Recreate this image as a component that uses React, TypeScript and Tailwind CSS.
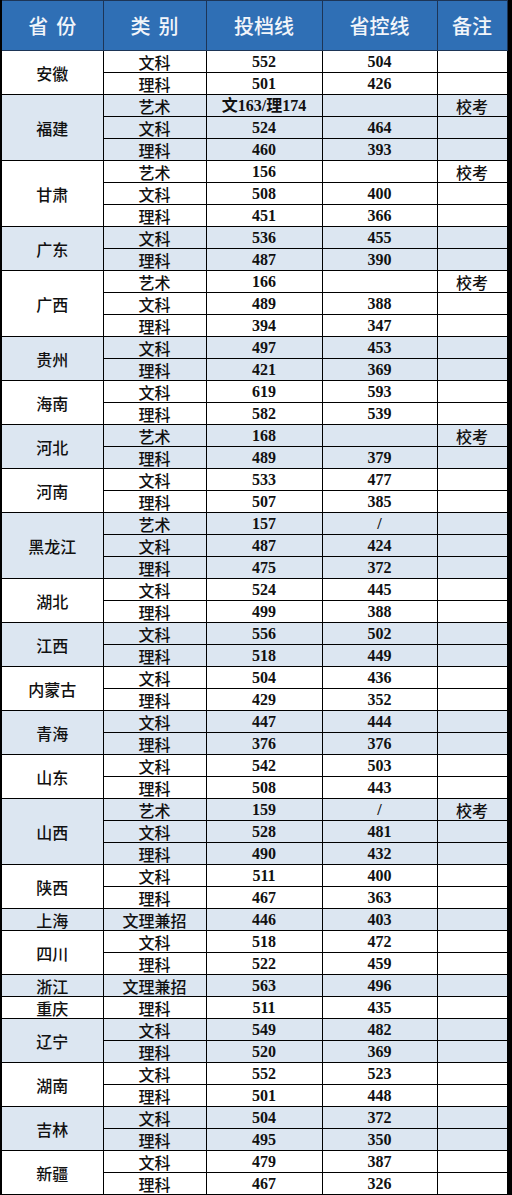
type Row = [string, string, string, string];

const groups: { p: string; rows: Row[] }[] = [
  { p: "安徽", rows: [["文科", "552", "504", ""], ["理科", "501", "426", ""]] },
  { p: "福建", rows: [["艺术", "文163/理174", "", "校考"], ["文科", "524", "464", ""], ["理科", "460", "393", ""]] },
  { p: "甘肃", rows: [["艺术", "156", "", "校考"], ["文科", "508", "400", ""], ["理科", "451", "366", ""]] },
  { p: "广东", rows: [["文科", "536", "455", ""], ["理科", "487", "390", ""]] },
  { p: "广西", rows: [["艺术", "166", "", "校考"], ["文科", "489", "388", ""], ["理科", "394", "347", ""]] },
  { p: "贵州", rows: [["文科", "497", "453", ""], ["理科", "421", "369", ""]] },
  { p: "海南", rows: [["文科", "619", "593", ""], ["理科", "582", "539", ""]] },
  { p: "河北", rows: [["艺术", "168", "", "校考"], ["理科", "489", "379", ""]] },
  { p: "河南", rows: [["文科", "533", "477", ""], ["理科", "507", "385", ""]] },
  { p: "黑龙江", rows: [["艺术", "157", "/", ""], ["文科", "487", "424", ""], ["理科", "475", "372", ""]] },
  { p: "湖北", rows: [["文科", "524", "445", ""], ["理科", "499", "388", ""]] },
  { p: "江西", rows: [["文科", "556", "502", ""], ["理科", "518", "449", ""]] },
  { p: "内蒙古", rows: [["文科", "504", "436", ""], ["理科", "429", "352", ""]] },
  { p: "青海", rows: [["文科", "447", "444", ""], ["理科", "376", "376", ""]] },
  { p: "山东", rows: [["文科", "542", "503", ""], ["理科", "508", "443", ""]] },
  { p: "山西", rows: [["艺术", "159", "/", "校考"], ["文科", "528", "481", ""], ["理科", "490", "432", ""]] },
  { p: "陕西", rows: [["文科", "511", "400", ""], ["理科", "467", "363", ""]] },
  { p: "上海", rows: [["文理兼招", "446", "403", ""]] },
  { p: "四川", rows: [["文科", "518", "472", ""], ["理科", "522", "459", ""]] },
  { p: "浙江", rows: [["文理兼招", "563", "496", ""]] },
  { p: "重庆", rows: [["理科", "511", "435", ""]] },
  { p: "辽宁", rows: [["文科", "549", "482", ""], ["理科", "520", "369", ""]] },
  { p: "湖南", rows: [["文科", "552", "523", ""], ["理科", "501", "448", ""]] },
  { p: "吉林", rows: [["文科", "504", "372", ""], ["理科", "495", "350", ""]] },
  { p: "新疆", rows: [["文科", "479", "387", ""], ["理科", "467", "326", ""]] },
];

const cjk = "font-['Noto_Sans_CJK_SC',sans-serif]";
const num = "font-['Liberation_Serif','Noto_Sans_CJK_SC',serif] font-bold";
const cell = "border border-black p-0 text-center align-middle leading-none";

const headers = [
  { t: "省份", wide: true },
  { t: "类别", wide: true },
  { t: "投档线", wide: false },
  { t: "省控线", wide: false },
  { t: "备注", wide: false },
];

export default function App() {
  return (
    <div className="flex w-[512px] bg-black">
      <table className="w-[506px] table-fixed border-collapse bg-white text-[#111] border-l-2 border-l-black">
        <colgroup>
          <col className="w-[102px]" />
          <col className="w-[103px]" />
          <col className="w-[116px]" />
          <col className="w-[115px]" />
          <col className="w-[70px]" />
        </colgroup>
        <thead>
          <tr className={`h-[50px] bg-[#2f6fb5] text-[20px] text-[#f2f5fa] ${cjk}`}>
            {headers.map((h) => (
              <th key={h.t} className="border border-[#1d3556] p-0 text-center font-medium">
                <span className={h.wide ? "tracking-[8px] pl-[8px]" : ""}>{h.t}</span>
              </th>
            ))}
          </tr>
        </thead>
        <tbody>
          {groups.map((g, gi) => {
            const bg = gi % 2 === 1 ? "bg-[#dce6f1]" : "bg-white";
            return g.rows.map((r, ri) => (
              <tr key={g.p + ri} className={`h-[22px] ${bg}`}>
                {ri === 0 && (
                  <td rowSpan={g.rows.length} className={`${cell} ${cjk} text-[16px] font-medium`}>
                    {g.p}
                  </td>
                )}
                <td className={`${cell} ${cjk} text-[16px] font-medium`}>{r[0]}</td>
                <td className={`${cell} ${num} text-[16px]`}>{r[1]}</td>
                <td className={`${cell} ${num} text-[16px]`}>{r[2]}</td>
                <td className={`${cell} ${cjk} text-[16px] font-medium`}>{r[3]}</td>
              </tr>
            ));
          })}
        </tbody>
      </table>
    </div>
  );
}
